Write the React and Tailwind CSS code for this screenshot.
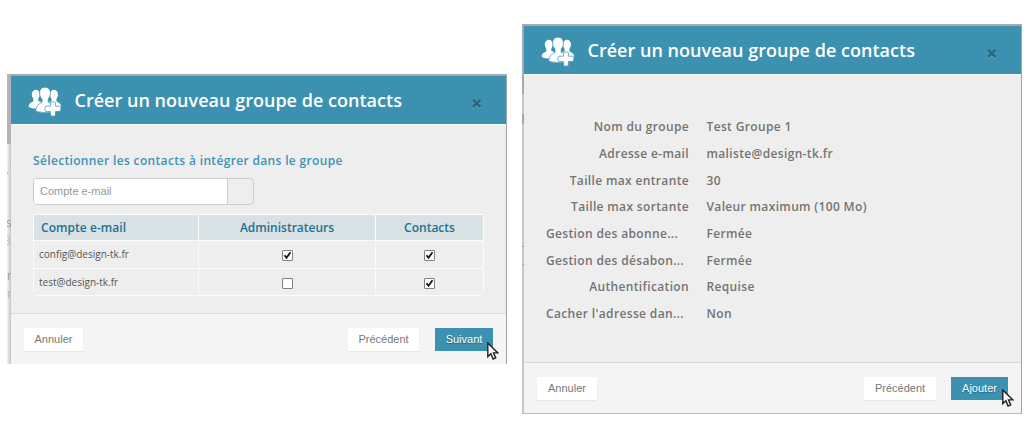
import React from "react";

function GroupIcon() {
  return (
    <svg className="block h-[30px] w-[34px] shrink-0" viewBox="0 0 34 30">
      <g fill="#fff">
        <ellipse cx="7.800" cy="7.600" rx="4" ry="4.900" />
        <ellipse cx="26" cy="7.600" rx="4" ry="4.900" />
        <path d="M5.300 10v4.500Q.6 16 .6 19.500q2 2 7 2l4-2.500 2-4-3.300-1V10zM23.500 10v4.500l-3 .5 2 4 4 2h6.500q1-4.500-4.500-6.500V10z" />
      </g>
      <g fill="#fff" stroke="#3c91b1" strokeWidth=".7">
        <path d="M17 .2c3.600 0 5.400 2.300 5.400 5.900 0 2.400-.9 4.500-2.200 5.800v3.300q5.500 1.600 5.900 5l-1 4.400q-8 2.500-17.200-.2-.4-6.500 6.100-9v-3.500C12.500 10.600 11.600 8.500 11.600 6.100c0-3.600 1.800-5.900 5.400-5.900z" />
        <path d="M22.600 15.300q2.400-1 4.800 0v3.900h4.600q2 2.500 0 5.300h-4.600v4q-2.200 1.600-4.900 0v-4h-4.800q-1.900-2.700 0-5.300h4.900v-3.900z" />
      </g>
    </svg>
  );
}

function Cursor({ className }) {
  return (
    <svg className={"absolute h-[18px] w-[12px] " + className} viewBox="0 0 12 18">
      <path d="M.8 1v13.600l3.100-2.900 2.200 5.300 2.600-1.100-2.200-5h4.400z" fill="#fff" stroke="#222" strokeWidth="1.400" />
    </svg>
  );
}

function Header() {
  return (
    <header className="flex h-[48px] shrink-0 items-start bg-[#3c91b1] pl-[17px]">
      <div className="pt-[11px]"><GroupIcon /></div>
      <h1 className="ml-[12.500px] mt-[10px] grow whitespace-nowrap text-[18px] leading-[28px] font-semibold tracking-[0.02px] text-white">
        Créer un nouveau groupe de contacts
      </h1>
      <svg className="mr-[24px] mt-[22px] h-[11px] w-[11px] shrink-0" viewBox="0 0 11 11">
        <path d="M2 3l7.500 7M9.500 3l-7.500 7" stroke="#66acc5" strokeWidth="2.400" />
        <path d="M2 2l7.500 7M9.500 2l-7.500 7" stroke="#2b687f" strokeWidth="2.600" />
      </svg>
    </header>
  );
}

function Button({ className, children }) {
  return (
    <button
      className={
        "relative flex h-[23px] shrink-0 items-center justify-center whitespace-nowrap font-['Liberation_Sans',sans-serif] text-[11px] leading-none " +
        className
      }
    >
      {children}
    </button>
  );
}

const PLAIN = "bg-white text-[#777] shadow-[0_1px_1px_#e7e7e7]";
const PRIMARY = "bg-[#3c91b1] text-white [text-shadow:0_1px_1px_#1c6582]";

function Checkbox({ checked }) {
  return (
    <svg className="mx-auto block h-[11px] w-[11px]" viewBox="0 0 11 11">
      <rect x=".5" y=".5" width="10" height="10" rx=".5" fill="#fff" stroke="#85827d" />
      {checked && <path d="M2.500 5.200l2 2.500 4-5.400" fill="none" stroke="#151515" strokeWidth="1.800" />}
    </svg>
  );
}

const CONTACTS = [
  { mail: "config@design-tk.fr", admin: true, contact: true },
  { mail: "test@design-tk.fr", admin: false, contact: true },
];

const SUMMARY = [
  ["Nom du groupe", "Test Groupe 1"],
  ["Adresse e-mail", "maliste@design-tk.fr"],
  ["Taille max entrante", "30"],
  ["Taille max sortante", "Valeur maximum (100 Mo)"],
  ["Gestion des abonne...", "Fermée"],
  ["Gestion des désabon...", "Fermée"],
  ["Authentification", "Requise"],
  ["Cacher l'adresse dan...", "Non"],
];

function SelectDialog() {
  return (
    <section className="mt-[74px] ml-[7px] flex h-[290px] w-[500px] shrink-0 bg-[#e6e6e6]">
      <div className="relative w-[4px] shrink-0 overflow-hidden bg-gradient-to-r from-[#f4f4f4] to-[#c4c4c4] text-[12px] leading-[14px] text-[#999]">
        <div className="h-[70px] bg-[#b2b4b9]" />
        <span className="absolute top-[89px] left-[-1px]">.1</span>
        <span className="absolute top-[142px] left-[-1px]">s</span>
        <span className="absolute top-[160px] left-[-3px] text-[#bbb]">3</span>
        <span className="absolute top-[195px] left-[0px]">r</span>
        <span className="absolute top-[213px] left-[0px] text-[#8ac0d8]">r</span>
      </div>
      <div className="flex w-[496px] flex-col border-t-2 border-r border-t-[#a9aaac] border-r-[#a3a3a3]">
        <Header />
        <div className="flex h-[189px] shrink-0 flex-col border-t border-t-[#fafafa] bg-[#eee] pl-[22px]">
          <h2 className="mt-[27px] whitespace-nowrap text-[12px] leading-[17px] font-semibold tracking-[0.34px] text-[#3c93b4]">
            Sélectionner les contacts à intégrer dans le groupe
          </h2>
          <div className="mt-[9px] flex h-[27px] w-[221px] shrink-0 overflow-hidden rounded-[4px] border border-[#ccc]">
            <div className="flex w-[193px] items-center bg-white pl-[6px] font-['Liberation_Sans',sans-serif] text-[11px] text-[#999]">
              Compte e-mail
            </div>
            <div className="grow border-l border-[#ccc]" />
          </div>
          <div className="mt-[9px] grid h-[82px] w-[451px] shrink-0 grid-cols-[164px_176px_107px] grid-rows-[25px_27px_26px] gap-px gap-x-px rounded-b-[4px] border border-[#fbfbfb] bg-[#fbfbfb]">
            <div className="flex items-center bg-[#d8e1e3] pl-[7px] text-[12px] font-semibold tracking-[0.05px] text-[#1f7190]">Compte e-mail</div>
            <div className="flex items-center justify-center bg-[#d8e1e3] text-[12px] font-semibold text-[#1f7190]">Administrateurs</div>
            <div className="flex items-center justify-center bg-[#d8e1e3] text-[12px] font-semibold text-[#1f7190]">Contacts</div>
            {CONTACTS.map((c) => (
              <React.Fragment key={c.mail}>
                <div className="flex items-center bg-[#eee] pl-[5px] text-[10px] text-[#555]">{c.mail}</div>
                <div className="flex items-center bg-[#eee] pt-[2px]"><Checkbox checked={c.admin} /></div>
                <div className="flex items-center bg-[#eee] pt-[2px]"><Checkbox checked={c.contact} /></div>
              </React.Fragment>
            ))}
          </div>
        </div>
        <footer className="flex grow items-start border-t border-[#d8d8d8] bg-[#f4f4f4] pt-[14px] pl-[13px]">
          <Button className={"w-[59px] " + PLAIN}>Annuler</Button>
          <Button className={"ml-[265px] w-[71px] " + PLAIN}>Précédent</Button>
          <Button className={"ml-[16px] w-[58px] " + PRIMARY}>
            Suivant
            <Cursor className="top-[14px] left-[52px]" />
          </Button>
        </footer>
      </div>
    </section>
  );
}

function SummaryDialog() {
  return (
    <section className="mt-[24px] ml-[15px] flex h-[390px] w-[500px] shrink-0">
      <div className="relative w-[2px] shrink-0 overflow-hidden bg-[#c8c8c8]">
        <div className="h-[70px] bg-[#a9aaac]" />
        <div className="mt-[20px] h-[10px] bg-[#a5a5a5]" />
        <div className="mt-[122px] h-px bg-[#999]" />
        <div className="mt-[17px] h-px bg-[#7bb7e0]" />
      </div>
      <div className="flex w-[498px] flex-col border-t-2 border-r border-b border-t-[#a9aaac] border-r-[#a3a3a3] border-b-[#bebebe]">
        <Header />
        <div className="flex h-[288px] shrink-0 flex-col border-t border-t-[#fafafa] bg-[#eee] pt-[39px] pl-[22px]">
          {SUMMARY.map(([label, value]) => (
            <div key={label} className="flex h-[26.700px] shrink-0 items-center whitespace-nowrap text-[12px] font-semibold tracking-[0.35px] text-[#747474]">
              <div className={"w-[143px] " + (label.endsWith("...") ? "text-left" : "text-right")}>{label}</div>
              <div className="ml-[17.500px]">{value}</div>
            </div>
          ))}
        </div>
        <footer className="flex grow items-start border-t border-[#d8d8d8] bg-[#f4f4f4] pt-[14px] pl-[13px]">
          <Button className={"w-[60px] " + PLAIN}>Annuler</Button>
          <Button className={"ml-[267px] w-[72px] " + PLAIN}>Précédent</Button>
          <Button className={"ml-[15px] w-[57px] " + PRIMARY}>
            Ajouter
            <Cursor className="top-[12px] left-[51px]" />
          </Button>
        </footer>
      </div>
    </section>
  );
}

export default function App() {
  return (
    <main className="flex h-[438px] w-[1024px] items-start overflow-hidden bg-white font-['Open_Sans',sans-serif]">
      <SelectDialog />
      <SummaryDialog />
    </main>
  );
}
